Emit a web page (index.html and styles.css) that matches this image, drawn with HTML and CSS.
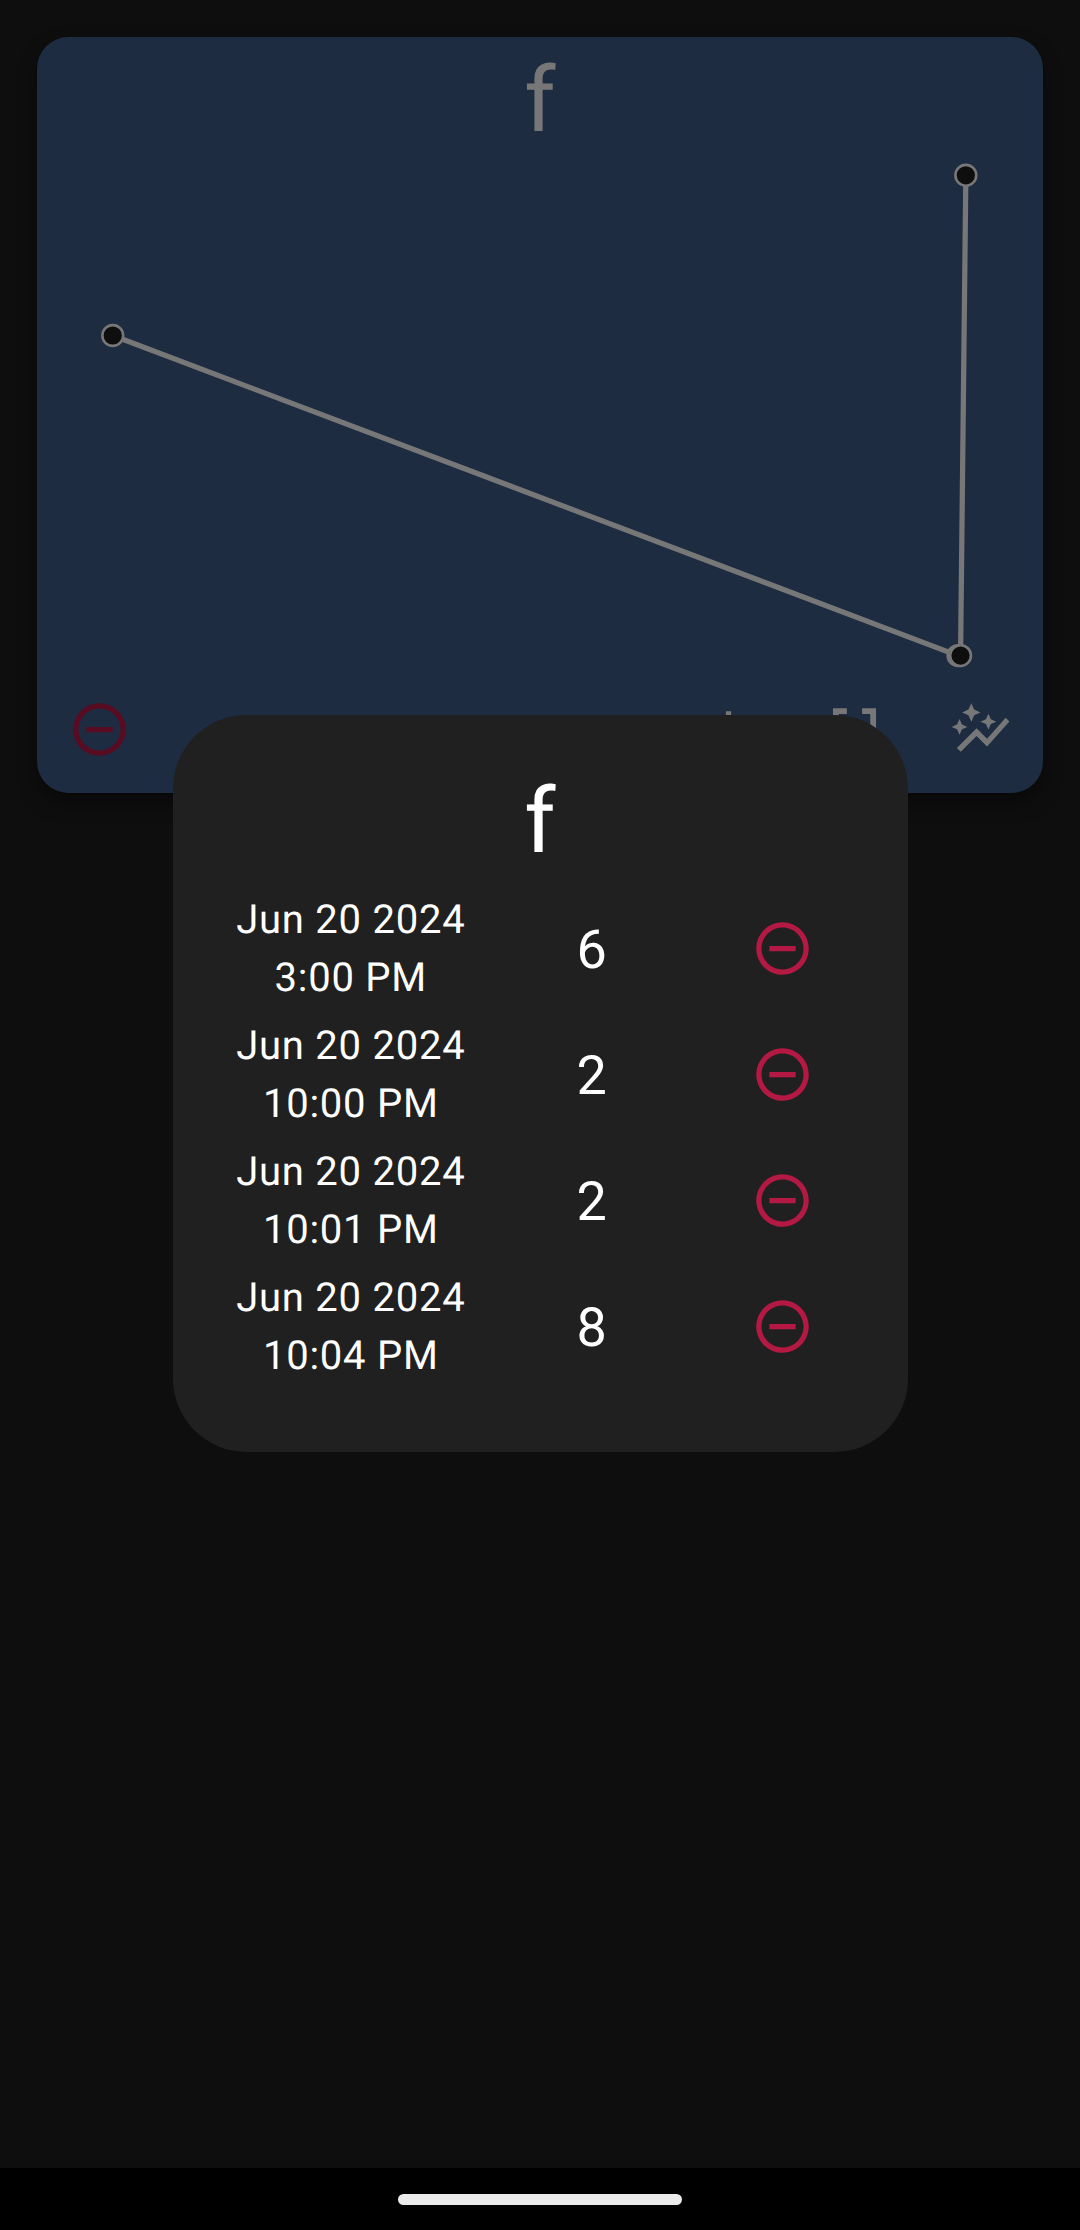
FILE: index.html
```html
<!DOCTYPE html>
<html lang="en">
<head>
<meta charset="utf-8">
<meta name="viewport" content="width=device-width">
<title>f</title>
<link rel="stylesheet" href="styles.css">
</head>
<body>
<svg class="defs" aria-hidden="true">
  <symbol id="minus" viewBox="0 0 24 24"><path d="M7 11v2h10v-2H7zm5-9C6.48 2 2 6.48 2 12s4.48 10 10 10 10-4.48 10-10S17.52 2 12 2zm0 18c-4.41 0-8-3.59-8-8s3.59-8 8-8 8 3.59 8 8-3.59 8-8 8z"/></symbol>
  <symbol id="add" viewBox="0 0 24 24"><path d="M19 13h-6v6h-2v-6H5v-2h6V5h2v6h6v2z"/></symbol>
  <symbol id="expand" viewBox="0 0 24 24"><path d="M3.8 3.9h5.3v2.2H6v3.1H3.8zM20.2 3.9h-5.3v2.2H18V12h2.2zM3.8 20.1h5.3v-2.2H6v-3.1H3.8zM20.2 20.1h-5.3v-2.2H18V12h2.2z"/></symbol>
  <symbol id="graph" viewBox="0 0 24 24"><path d="M14.06 9.94L12 9l2.06-.94L15 6l.94 2.06L18 9l-2.06.94L15 12l-.94-2.06zM4 14l.94-2.06L7 11l-2.06-.94L4 8l-.94 2.06L1 11l2.06.94L4 14zm4.5-5l1.09-2.41L12 5.5 9.59 4.41 8.5 2 7.41 4.41 5 5.5l2.41 1.09L8.5 9zm-4 11.5l6-6.01 4 4L23 8.93l-1.41-1.41-7.09 7.97-4-4L3 19l1.5 1.5z"/></symbol>
</svg>
<main class="screen">
  <section class="card">
    <h1 class="title">f</h1>
    <svg class="chart" viewBox="37 153 1006 545">
      <path class="line" d="M112.5 335.5L957.8 655.6L960.3 655.6L965.6 175.3"/>
      <circle class="dot" cx="112.5" cy="335.5" r="10.4"/>
      <circle class="dot" cx="957.8" cy="655.6" r="10.4"/>
      <circle class="dot" cx="960.3" cy="655.6" r="10.4"/>
      <circle class="dot" cx="965.6" cy="175.3" r="10.4"/>
    </svg>
    <div class="actions">
      <svg class="icon remove"><use href="#minus"/></svg>
      <svg class="icon"><use href="#add"/></svg>
      <svg class="icon"><use href="#expand"/></svg>
      <svg class="icon"><use href="#graph"/></svg>
    </div>
  </section>
</main>
<footer class="navbar"><div class="handle"></div></footer>
<section class="dialog">
  <h2 class="title">f</h2>
  <ul class="entries">
    <li class="entry"><div class="date">Jun 20 2024<br>3:00 PM</div><div class="value">6</div><svg class="icon"><use href="#minus"/></svg></li>
    <li class="entry"><div class="date">Jun 20 2024<br>10:00 PM</div><div class="value">2</div><svg class="icon"><use href="#minus"/></svg></li>
    <li class="entry"><div class="date">Jun 20 2024<br>10:01 PM</div><div class="value">2</div><svg class="icon"><use href="#minus"/></svg></li>
    <li class="entry"><div class="date">Jun 20 2024<br>10:04 PM</div><div class="value">8</div><svg class="icon"><use href="#minus"/></svg></li>
  </ul>
</section>
</body>
</html>
```
FILE: styles.css
```css
* {
  box-sizing: border-box;
}

body {
  margin: 0;
  position: relative;
  display: flex;
  flex-direction: column;
  height: 2230px;
  overflow: hidden;
  background: #0e0e0e;
  font-family: Roboto, sans-serif;
  text-rendering: geometricPrecision;
}

.defs {
  position: absolute;
  width: 0;
  height: 0;
}

.screen {
  flex: 1;
  padding: 36.5px 36.75px;
}

.card {
  display: flex;
  flex-direction: column;
  height: 756px;
  padding-top: 12px;
  border-radius: 31.5px;
  background: #1e2c42;
  box-shadow: 0 10px 20px rgba(0, 0, 0, 0.4);
  color: #777;
}

.title {
  margin: 0;
  font-size: 90px;
  font-weight: 400;
  line-height: 104px;
  text-align: center;
}

.chart {
  display: block;
  width: 100%;
  height: 545px;
}

.line {
  fill: none;
  stroke: #777;
  stroke-width: 5.25;
}

.dot {
  fill: #0e0e0e;
  stroke: #777;
  stroke-width: 2.6;
}

.actions {
  display: flex;
  gap: 63px;
  padding: 0 31.5px;
}

.icon {
  width: 63px;
  height: 63px;
  fill: currentColor;
}

.remove {
  margin-right: auto;
  color: #590b21;
}

.navbar {
  display: flex;
  justify-content: center;
  height: 62.5px;
  padding-top: 26px;
  background: #000;
}

.handle {
  width: 284px;
  height: 11px;
  border-radius: 5.5px;
  background: #ebebeb;
}

.dialog {
  position: absolute;
  top: 715px;
  left: 172.5px;
  width: 735px;
  height: 737.4px;
  padding: 55px 63px;
  border-radius: 73.5px;
  background: #202020;
  color: #fff;
}

.entries {
  margin: 11.4px 0 0;
  padding: 0;
  list-style: none;
}

.entry {
  display: grid;
  grid-template-columns: 230.6px 251px 63px;
  align-items: center;
  height: 126px;
}

.date {
  padding-top: 2px;
  font-size: 40px;
  line-height: 58px;
  letter-spacing: 0.75px;
  text-align: center;
  white-space: nowrap;
}

.value {
  padding-top: 5px;
  font-size: 54px;
  line-height: 64px;
  text-align: center;
}

.entry .icon {
  margin-left: 33.9px;
  color: #b31942;
}
```
